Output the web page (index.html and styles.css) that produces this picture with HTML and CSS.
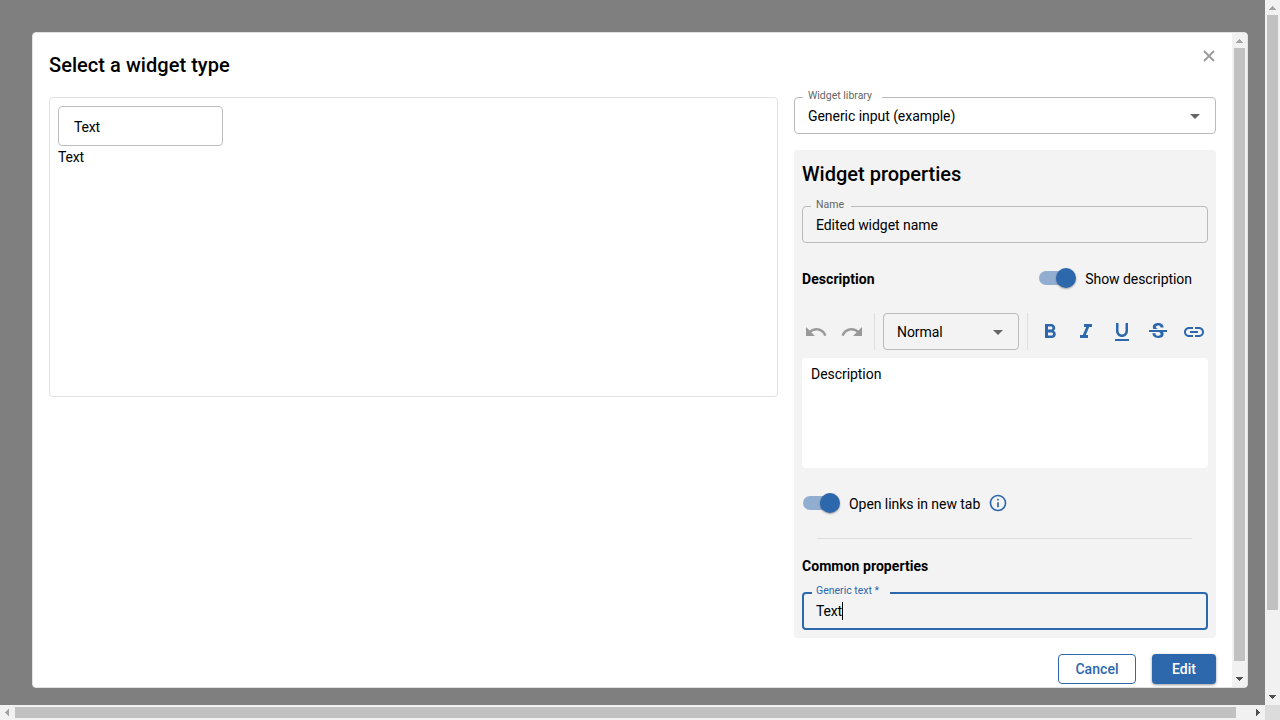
FILE: index.html
```html
<!DOCTYPE html>
<html lang="en">
<head>
<meta charset="utf-8">
<title>Select a widget type</title>
<link rel="stylesheet" href="styles.css">
</head>
<body>
<div class="window">
  <main class="backdrop">
    <div class="dialog">
      <div class="dialog-content">
        <header class="dialog-header">
          <h1 class="title title-dialog">Select a widget type</h1>
          <svg class="close" width="12" height="12" viewBox="0 0 12 12"><path d="M1 1L11 11M11 1L1 11"/></svg>
        </header>
        <div class="columns">
          <section class="preview">
            <div class="preview-input">Text</div>
            <div class="preview-text">Text</div>
          </section>
          <div class="side">
            <div class="field field-library">
              <span class="label label-library">Widget library</span>
              <span class="value">Generic input (example)</span>
              <svg class="caret" width="10" height="5" viewBox="0 0 10 5"><path d="M0 0h10L5 5z"/></svg>
            </div>
            <section class="panel">
              <h2 class="title">Widget properties</h2>
              <div class="field field-name">
                <span class="label label-name">Name</span>
                <span class="value">Edited widget name</span>
              </div>
              <div class="description-row">
                <h3 class="subtitle">Description</h3>
                <div class="toggle"><span class="track"><span class="thumb"></span></span><span>Show description</span></div>
              </div>
              <div class="toolbar">
                <div class="tool-group">
                  <svg class="icon icon-off" viewBox="0 0 24 24"><path d="M12.5 8c-2.65 0-5.05.99-6.9 2.6L2 7v9h9l-3.62-3.62c1.39-1.16 3.16-1.88 5.12-1.88 3.54 0 6.55 2.31 7.6 5.5l2.37-.78C21.08 11.03 17.15 8 12.5 8z"/></svg>
                  <svg class="icon icon-off" viewBox="0 0 24 24"><path d="M18.4 10.6C16.55 8.99 14.15 8 11.5 8c-4.65 0-8.58 3.03-9.96 7.22L3.9 16c1.05-3.19 4.05-5.5 7.6-5.5 1.95 0 3.73.72 5.12 1.88L13 16h9V7l-3.6 3.6z"/></svg>
                </div>
                <span class="separator"></span>
                <div class="field field-format">
                  <span class="value">Normal</span>
                  <svg class="caret" width="10" height="5" viewBox="0 0 10 5"><path d="M0 0h10L5 5z"/></svg>
                </div>
                <span class="separator"></span>
                <div class="tool-group">
                  <svg class="icon" viewBox="0 0 24 24"><path d="M15.6 10.79c.97-.67 1.65-1.77 1.65-2.79 0-2.26-1.75-4-4-4H7v14h7.04c2.09 0 3.71-1.7 3.71-3.79 0-1.52-.86-2.82-2.15-3.42zM10 6.5h3c.83 0 1.5.67 1.5 1.5s-.67 1.5-1.5 1.5h-3v-3zm3.5 9H10v-3h3.5c.83 0 1.5.67 1.5 1.5s-.67 1.5-1.5 1.5z"/></svg>
                  <svg class="icon" viewBox="0 0 24 24"><path d="M10 4v3h2.21l-3.42 8H6v3h8v-3h-2.21l3.42-8H18V4z"/></svg>
                  <svg class="icon" viewBox="0 0 24 24"><path d="M12 17c3.31 0 6-2.69 6-6V3h-2.5v8c0 1.93-1.57 3.5-3.5 3.5S8.5 12.93 8.5 11V3H6v8c0 3.31 2.69 6 6 6zm-7 2v2h14v-2H5z"/></svg>
                  <svg class="icon" viewBox="0 0 24 24"><path d="M6.85 7.08C6.85 4.37 9.45 3 12.24 3c1.64 0 3 .49 3.9 1.28.77.65 1.46 1.73 1.46 3.24h-3.01c0-.31-.05-.59-.15-.85-.29-.86-1.2-1.28-2.25-1.28-1.86 0-2.34 1.02-2.34 1.7 0 .48.25.88.74 1.21.38.25.77.48 1.41.7H7.39c-.21-.34-.54-.89-.54-1.92zM21 12v-2H3v2h9.62c1.15.45 1.96.75 1.96 1.97 0 1-.81 1.67-2.28 1.67-1.54 0-2.93-.54-2.93-2.51H6.4c0 .55.08 1.13.24 1.58.81 2.29 3.29 3.3 5.67 3.3 2.27 0 5.3-.89 5.3-4.05 0-.3-.01-1.16-.48-1.94H21V12z"/></svg>
                  <svg class="icon" viewBox="0 0 24 24"><path d="M3.9 12c0-1.71 1.39-3.1 3.1-3.1h4V7H7c-2.76 0-5 2.24-5 5s2.24 5 5 5h4v-1.9H7c-1.71 0-3.1-1.39-3.1-3.1zM8 13h8v-2H8v2zm9-6h-4v1.9h4c1.71 0 3.1 1.39 3.1 3.1s-1.39 3.1-3.1 3.1h-4V17h4c2.76 0 5-2.24 5-5s-2.24-5-5-5z"/></svg>
                </div>
              </div>
              <div class="editor">Description</div>
              <div class="links-row">
                <div class="toggle"><span class="track"><span class="thumb"></span></span><span>Open links in new tab</span></div>
                <svg class="info" viewBox="0 0 24 24"><path d="M11 7h2v2h-2zm0 4h2v6h-2zm1-9C6.48 2 2 6.48 2 12s4.48 10 10 10 10-4.48 10-10S17.52 2 12 2zm0 18c-4.41 0-8-3.59-8-8s3.59-8 8-8 8 3.59 8 8-3.59 8-8 8z"/></svg>
              </div>
              <hr class="rule">
              <h3 class="subtitle subtitle-common">Common properties</h3>
              <div class="field field-active">
                <span class="label label-generic">Generic text *</span>
                <span class="value">Text</span><span class="cursor"></span>
              </div>
            </section>
          </div>
        </div>
        <footer class="actions">
          <button class="button button-outline">Cancel</button>
          <button class="button button-solid">Edit</button>
        </footer>
      </div>
      <div class="bar bar-y bar-dialog">
        <svg class="arrow arrow-off" viewBox="0 0 15 15"><path d="M7 6h1v1h1v1h1v1h1v1H4V9h1V8h1V7h1z"/></svg>
        <span class="bar-thumb"></span>
        <svg class="arrow" viewBox="0 0 15 15"><path d="M4 5h7v1h-1v1H9v1H8v1H7V8H6V7H5V6H4z"/></svg>
      </div>
    </div>
  </main>
  <div class="bar bar-y bar-page">
    <svg class="arrow arrow-off" viewBox="0 0 15 15"><path d="M7 6h1v1h1v1h1v1h1v1H4V9h1V8h1V7h1z"/></svg>
    <span class="bar-thumb"></span>
    <svg class="arrow" viewBox="0 0 15 15"><path d="M4 5h7v1h-1v1H9v1H8v1H7V8H6V7H5V6H4z"/></svg>
  </div>
  <div class="bar bar-x">
    <svg class="arrow arrow-off" viewBox="0 0 15 15"><path d="M9 4v7H8v-1H7V9H6V8H5V7h1V6h1V5h1V4z"/></svg>
    <span class="bar-thumb"></span>
    <svg class="arrow" viewBox="0 0 15 15"><path d="M6 4h1v1h1v1h1v1h1v1H9v1H8v1H7v1H6z"/></svg>
  </div>
  <div class="corner"></div>
</div>
</body>
</html>
```
FILE: styles.css
```css
* { box-sizing: border-box; }
body { margin: 0; overflow: hidden; font: 14px/20px Roboto, sans-serif; letter-spacing: -0.05px; color: #000; }
h1, h2, h3 { margin: 0; }
svg { display: block; flex: none; }

.window { display: grid; grid-template: 705px 15px / 1265px 15px; width: 1280px; height: 720px; }
.backdrop { background: #7f7f7f; padding: 32px 17px 17px 32px; }
.dialog { display: flex; height: 656px; border: 1px solid #e2e2e2; border-radius: 4px; background: #fff; overflow: hidden; }
.dialog-content { flex: 1; padding: 16px 16px 0; }
.dialog-header { display: flex; justify-content: space-between; height: 48px; }
.title { font-size: 20px; line-height: 32px; font-weight: 500; letter-spacing: 0; }
.title-dialog { letter-spacing: 0.05px; }
.close { margin: 1px 1px 0 0; fill: none; stroke: #999; stroke-width: 1.8; }

.columns { display: flex; gap: 16px; }
.preview { width: 729px; height: 300px; padding: 8px; border: 1px solid #e2e2e2; border-radius: 4px; }
.preview-input { width: 165px; height: 40px; padding: 10px 15px; border: 1px solid #bdbdbd; border-radius: 4px; letter-spacing: -0.2px; }
.preview-text { margin-top: 1px; letter-spacing: -0.2px; }
.side { width: 422px; }

.field { position: relative; display: flex; align-items: center; height: 37px; padding: 0 13px; border: 1px solid #bababa; border-radius: 4px; }
.label { position: absolute; top: -9px; left: 8px; height: 14px; padding-left: 5px; font-size: 10.5px; line-height: 14px; letter-spacing: 0; color: #666; background: #fff; white-space: nowrap; }
.label-library { width: 79px; }
.label-name { width: 40px; background: #f3f3f3; }
.label-generic { width: 78px; padding-left: 4px; background: #f3f3f3; color: #2d67ac; }
.caret { margin: 2px 0 0 auto; fill: #666; }
.field-library { padding-right: 15px; }
.field-active { height: 38px; padding: 0 12px; border: 2px solid #2d67ac; letter-spacing: -0.2px; }
.field-active .label { top: -10px; }
.cursor { width: 1px; height: 18px; background: #000; }

.panel { height: 488px; margin-top: 16px; padding: 8px; border-radius: 4px; background: #f3f3f3; }
.field-name { margin-top: 16px; }
.subtitle { font-size: 14px; line-height: 20px; font-weight: 700; letter-spacing: 0.06px; }
.description-row { display: flex; justify-content: space-between; align-items: center; height: 40px; margin-top: 16px; padding-right: 16px; }
.toggle { display: flex; align-items: center; gap: 10px; }
.track { position: relative; width: 36px; height: 14px; margin-top: -2px; border-radius: 7px; background: #91aed1; }
.thumb { position: absolute; top: -3px; right: -1px; width: 20px; height: 20px; border-radius: 50%; background: #2d67ac; box-shadow: 0 1px 2px rgba(0, 0, 0, .35); }
.toolbar { display: flex; align-items: center; margin-top: 14px; height: 37px; }
.tool-group { display: flex; gap: 12px; padding: 0 2px; }
.tool-group:first-child { padding-right: 10px; }
.tool-group:last-child { padding-left: 10px; }
.icon { width: 24px; height: 24px; fill: #2d67ac; }
.icon-off { fill: #999; }
.separator { width: 1px; height: 37px; background: #dedede; }
.field-format { width: 136px; margin: 0 8px; padding-right: 15px; }
.editor { height: 110px; margin-top: 8px; padding: 6px 9px; border-radius: 4px; background: #fff; }
.links-row { display: flex; align-items: center; gap: 8px; height: 40px; margin-top: 16px; padding-left: 1px; }
.info { width: 20px; height: 20px; margin-top: -2px; fill: #2d67ac; }
.rule { height: 1px; margin: 14px 16px 0 15px; border: 0; background: #dedede; }
.subtitle-common { margin: 17px 0 16px; }

.actions { display: flex; justify-content: flex-end; gap: 16px; margin-top: 16px; }
.button { height: 30px; padding: 0; border-radius: 4px; font: 500 14px/28px Roboto, sans-serif; letter-spacing: 0.05px; }
.button-outline { width: 78px; border: 1px solid #2d67ac; background: #fff; color: #2d67ac; }
.button-solid { width: 64px; border: 0; background: #2d67ac; color: #fff; box-shadow: 0 1px 3px rgba(0, 0, 0, .4); }

.bar { display: flex; background: #f1f1f1; }
.bar-y { flex-direction: column; width: 15px; }
.bar-x { height: 15px; }
.bar-thumb { background: #c1c1c1; }
.bar-y .bar-thumb { width: 11px; margin: 0 2px auto; }
.bar-x .bar-thumb { width: 1221px; height: 11px; margin: 2px auto 2px 0; }
.bar-dialog .bar-thumb { height: 613px; }
.bar-page .bar-thumb { height: 595px; }
.arrow { width: 15px; height: 15px; fill: #505050; shape-rendering: crispEdges; }
.arrow-off { fill: #a3a3a3; }
.corner { background: #dcdcdc; }
```
